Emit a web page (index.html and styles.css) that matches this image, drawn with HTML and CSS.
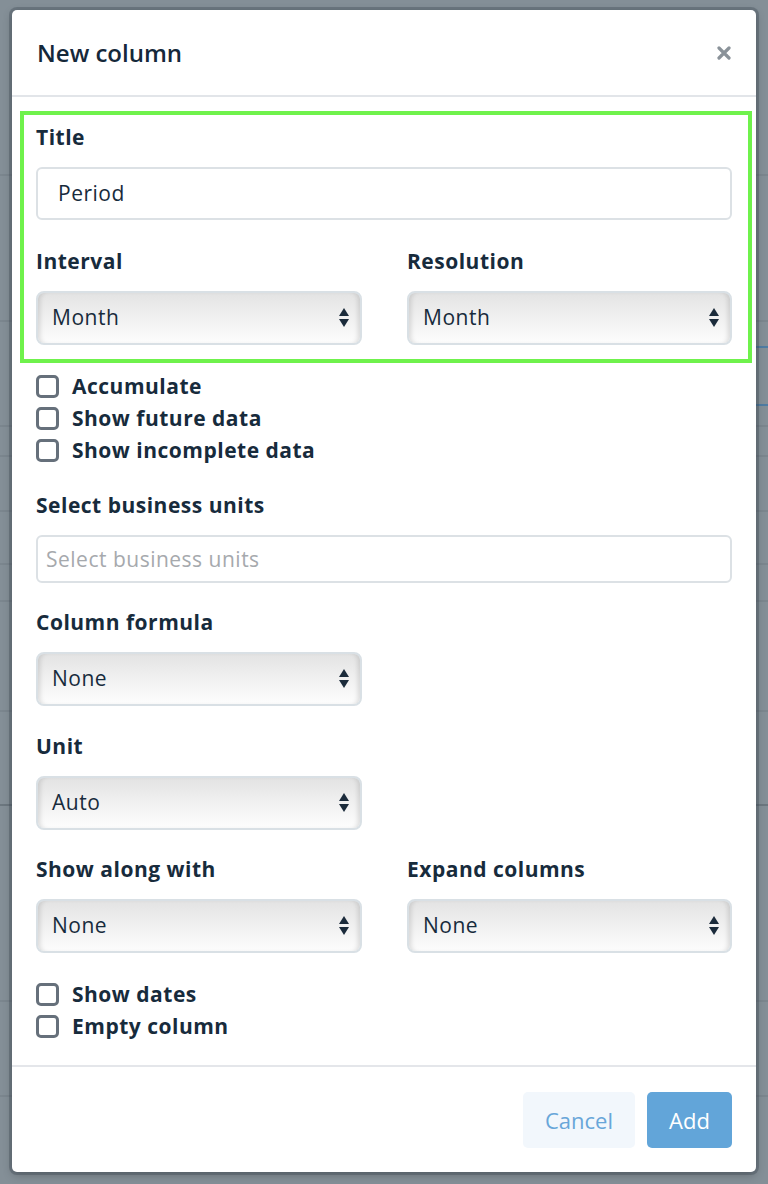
FILE: index.html
```html
<!DOCTYPE html>
<html lang="en">
<head>
<meta charset="utf-8">
<title>New column</title>
<link rel="stylesheet" href="styles.css">
</head>
<body>
<div class="modal">
  <div class="modal-header">
    <h2 class="modal-title">New column</h2>
    <button class="close" aria-label="Close">
      <svg width="14" height="14" viewBox="0 0 14 14"><path d="M2 2L12 12M12 2L2 12" stroke="#8a9299" stroke-width="3.2" stroke-linecap="round"/></svg>
    </button>
  </div>
  <div class="modal-body">
    <div class="highlight">
      <div class="field">
        <label class="label">Title</label>
        <div class="input">Period</div>
      </div>
      <div class="row2 field-interval">
        <div>
          <label class="label">Interval</label>
          <div class="select"><span>Month</span><span class="arrows"><i class="up"></i><i class="down"></i></span></div>
        </div>
        <div>
          <label class="label">Resolution</label>
          <div class="select"><span>Month</span><span class="arrows"><i class="up"></i><i class="down"></i></span></div>
        </div>
      </div>
    </div>

    <div class="checks checks-first">
      <div class="check"><span class="box"></span>Accumulate</div>
      <div class="check"><span class="box"></span>Show future data</div>
      <div class="check"><span class="box"></span>Show incomplete data</div>
    </div>

    <div class="group group-units">
      <label class="label">Select business units</label>
      <div class="input short placeholder">Select business units</div>
    </div>

    <div class="group group-formula">
      <label class="label">Column formula</label>
      <div class="row2">
        <div class="select"><span>None</span><span class="arrows"><i class="up"></i><i class="down"></i></span></div>
      </div>
    </div>

    <div class="group group-unit">
      <label class="label">Unit</label>
      <div class="row2">
        <div class="select"><span>Auto</span><span class="arrows"><i class="up"></i><i class="down"></i></span></div>
      </div>
    </div>

    <div class="row2 group group-along">
      <div>
        <label class="label">Show along with</label>
        <div class="select"><span>None</span><span class="arrows"><i class="up"></i><i class="down"></i></span></div>
      </div>
      <div>
        <label class="label">Expand columns</label>
        <div class="select"><span>None</span><span class="arrows"><i class="up"></i><i class="down"></i></span></div>
      </div>
    </div>

    <div class="checks checks-last">
      <div class="check"><span class="box"></span>Show dates</div>
      <div class="check"><span class="box"></span>Empty column</div>
    </div>
  </div>
  <div class="modal-footer">
    <button class="btn btn-cancel">Cancel</button>
    <button class="btn btn-add">Add</button>
  </div>
</div>
</body>
</html>
```

FILE: styles.css
```css
* { box-sizing: border-box; }

html, body { margin: 0; }

body {
  width: 768px;
  height: 1184px;
  overflow: hidden;
  padding-top: 10px;
  font-family: "Open Sans", "Lato", sans-serif;
  color: #172b3c;
  background-color: #848f97;
  background-repeat: no-repeat;
  background-position: right top, left top;
  background-size: 14px 100%, 100% 100%;
  background-image:
    linear-gradient(to bottom,
      transparent 346px, #4f7ca3 346px, #4f7ca3 348px, transparent 348px,
      transparent 404px, #4f7ca3 404px, #4f7ca3 406px, transparent 406px),
    linear-gradient(to bottom,
      transparent 174px, #7b868e 174px, #7b868e 176px, transparent 176px,
      transparent 320px, #7b868e 320px, #7b868e 322px, transparent 322px,
      transparent 425px, #7b868e 425px, #7b868e 427px, transparent 427px,
      transparent 455px, #7b868e 455px, #7b868e 457px, transparent 457px,
      transparent 510px, #7b868e 510px, #7b868e 512px, transparent 512px,
      transparent 563px, #7b868e 563px, #7b868e 565px, transparent 565px,
      transparent 600px, #7b868e 600px, #7b868e 602px, transparent 602px,
      transparent 710px, #7b868e 710px, #7b868e 712px, transparent 712px,
      transparent 804px, #6c777f 804px, #6c777f 806px, transparent 806px,
      transparent 1000px, #7b868e 1000px, #7b868e 1002px, transparent 1002px,
      transparent 1095px, #7b868e 1095px, #7b868e 1097px, transparent 1097px);
}

.modal {
  width: 744px;
  height: 1162px;
  margin: 0 auto;
  background: #fff;
  border-radius: 5px;
  box-shadow: 0 0 0 3px rgba(60, 72, 82, 0.35), 0 3px 10px rgba(0, 0, 0, 0.25);
  display: flex;
  flex-direction: column;
}

.modal-header {
  height: 87px;
  padding: 0 24px 0 25px;
  display: flex;
  align-items: center;
  justify-content: space-between;
  border-bottom: 2px solid #e2e5e9;
}

.modal-title {
  margin: 0;
  font-size: 24px;
  font-weight: 600;
  line-height: 30px;
  color: #15283a;
}

.close {
  border: 0;
  background: none;
  padding: 0;
  margin-right: 1px;
  width: 14px;
  height: 14px;
  display: flex;
}

.modal-body {
  flex: 1;
  padding: 14px 24px 0 24px;
}

.highlight {
  margin: 0 -20px 0 -16px;
  border: 4px solid #6ff24c;
  padding: 11px 16px 14px 12px;
}

.label {
  display: block;
  font-size: 21px;
  font-weight: 700;
  letter-spacing: 0.5px;
  line-height: 22px;
  padding-bottom: 2px;
  margin-bottom: 17px;
}

.field-interval { margin-top: 30px; }

.group-units { margin-top: 28px; }
.group-formula { margin-top: 28px; }
.group-unit { margin-top: 29px; }
.group-along { margin-top: 28px; }

.input {
  height: 53px;
  border: 2px solid #dce1e5;
  border-radius: 6px;
  padding: 0 20px 1px;
  display: flex;
  align-items: center;
  font-size: 21px;
  letter-spacing: 0.5px;
  background: #fff;
}

.input.short {
  height: 48px;
  padding: 0 8px 1px;
}

.placeholder { color: #a6a9ad; }

.row2 {
  display: grid;
  grid-template-columns: 326px 325px;
  column-gap: 45px;
}

.select {
  height: 54px;
  border: 2px solid #d9e0e5;
  border-radius: 8px;
  background: linear-gradient(to bottom, #e3e3e3 0%, #eeeeee 40%, #fdfdfd 100%);
  box-shadow: inset 5px 0 5px -3px rgba(0, 0, 0, 0.13), inset -5px 0 5px -3px rgba(0, 0, 0, 0.13);
  display: flex;
  align-items: center;
  justify-content: space-between;
  padding: 0 11px 2px 14px;
  font-size: 21px;
  letter-spacing: 0.5px;
}

.arrows {
  display: flex;
  flex-direction: column;
  align-items: center;
  gap: 3px;
  margin-top: 1px;
}

.arrows i {
  display: block;
  width: 0;
  height: 0;
  border-left: 5px solid transparent;
  border-right: 5px solid transparent;
}

.arrows .up { border-bottom: 8px solid #1b2b3b; }
.arrows .down { border-top: 8px solid #1b2b3b; }

.checks-first { margin-top: 7px; }
.checks-last { margin-top: 25px; }

.check {
  height: 32px;
  display: flex;
  align-items: center;
  gap: 13px;
  font-size: 21px;
  font-weight: 700;
  letter-spacing: 0.5px;
}

.box {
  width: 23px;
  height: 23px;
  border: 3px solid #66707b;
  border-radius: 5px;
  background: #fff;
  flex: none;
}

.modal-footer {
  border-top: 2px solid #e4e6ea;
  padding: 25px 24px 24px;
  display: flex;
  justify-content: flex-end;
  gap: 12px;
}

.btn {
  height: 56px;
  border: 0;
  border-radius: 5px;
  font-family: inherit;
  font-size: 22px;
  padding: 0;
}

.btn-cancel {
  width: 112px;
  background: #f2f7fc;
  color: #68a6d9;
}

.btn-add {
  width: 85px;
  background: #62a5d9;
  color: #fff;
}
```
